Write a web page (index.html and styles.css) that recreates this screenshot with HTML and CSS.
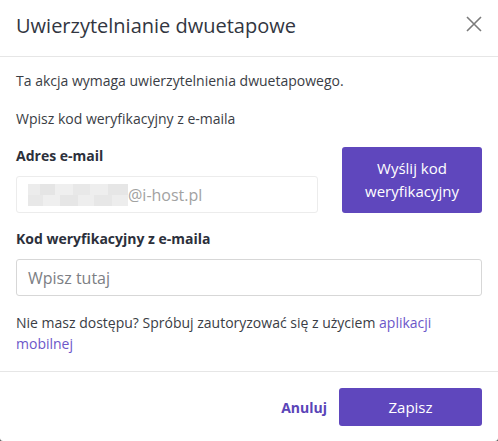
FILE: index.html
```html
<!DOCTYPE html>
<html lang="pl">
<head>
<meta charset="utf-8">
<title>Uwierzytelnianie dwuetapowe</title>
<link rel="stylesheet" href="styles.css">
</head>
<body>
<div class="modal">
  <header class="modal-header">
    <h1 class="modal-title">Uwierzytelnianie dwuetapowe</h1>
    <button class="close" aria-label="Zamknij">
      <svg width="16" height="16" viewBox="0 0 16 16"><path d="M1 1L15 15M15 1L1 15" stroke="#7b7b7b" stroke-width="1.6" fill="none"/></svg>
    </button>
  </header>
  <div class="modal-body">
    <p class="text">Ta akcja wymaga uwierzytelnienia dwuetapowego.</p>
    <p class="text gap">Wpisz kod weryfikacyjny z e-maila</p>
    <div class="email-row">
      <div class="field">
        <label class="label">Adres e-mail</label>
        <div class="input disabled"><span class="blur"></span><span class="domain">@i-host.pl</span></div>
      </div>
      <button class="btn send">Wyślij kod<br>weryfikacyjny</button>
    </div>
    <div class="field code">
      <label class="label">Kod weryfikacyjny z e-maila</label>
      <div class="input"><span class="placeholder">Wpisz tutaj</span></div>
    </div>
    <p class="text note">Nie masz dostępu? Spróbuj zautoryzować się z użyciem <a href="#" class="link">aplikacji</a><br><a href="#" class="link">mobilnej</a></p>
  </div>
  <footer class="modal-footer">
    <a href="#" class="cancel">Anuluj</a>
    <button class="btn save">Zapisz</button>
  </footer>
</div>
</body>
</html>
```
FILE: styles.css
```css
html, body { margin: 0; padding: 0; }
body {
  background: #5a5a5a;
  font-family: "Open Sans", "Noto Sans", sans-serif;
  width: 498px;
  height: 441px;
  overflow: hidden;
}
.modal {
  background: #fff;
  width: 498px;
  height: 441px;
  border-radius: 0 0 3px 3px;
  display: flex;
  flex-direction: column;
}
.modal-header {
  display: flex;
  align-items: flex-start;
  justify-content: space-between;
  padding: 12px 16px 0 16px;
  height: 44px;
  border-bottom: 1px solid #e6e6e6;
}
.modal-title {
  margin: 0;
  font-size: 20px;
  line-height: 27px;
  font-weight: 400;
  color: #323641;
}
.close {
  border: 0;
  background: none;
  padding: 0;
  margin-top: 4px;
  width: 16px;
  height: 16px;
  cursor: pointer;
}
.close svg { display: block; }
.modal-body {
  padding: 14px 16px 0 16px;
  height: 300px;
  border-bottom: 1px solid #e6e6e6;
}
.text {
  margin: 0;
  font-size: 14px;
  line-height: 20px;
  color: #3a3d45;
}
.gap { margin-top: 18px; }
.email-row {
  display: flex;
  align-items: flex-end;
  gap: 24px;
  margin-top: 17px;
}
.field { display: flex; flex-direction: column; }
.email-row .field { width: 302px; }
.label {
  font-size: 14px;
  line-height: 20px;
  font-weight: 700;
  color: #2c303b;
  margin-bottom: 10px;
}
.input {
  box-sizing: border-box;
  height: 37px;
  border: 1px solid #d7d7d7;
  border-radius: 3px;
  padding: 0 11px;
  display: flex;
  align-items: center;
  font-size: 16px;
}
.input.disabled { border-color: #ececec; }
.blur {
  display: inline-block;
  width: 100px;
  height: 22px;
  background:
    linear-gradient(90deg, #ececec 0 12%, #e5e5e5 12% 27%, #efefef 27% 45%, #e8e8e8 45% 62%, #eeeeee 62% 80%, #e6e6e6 80% 100%) top / 100% 50% no-repeat,
    linear-gradient(90deg, #e8e8e8 0 15%, #efefef 15% 32%, #e6e6e6 32% 50%, #eeeeee 50% 66%, #e7e7e7 66% 84%, #ededed 84% 100%) bottom / 100% 50% no-repeat;
}
.domain { color: #a2a2a2; }
.placeholder { color: #7c7e84; }
.btn {
  border: 0;
  background: #5f47bd;
  color: #fff;
  font-family: "Open Sans", "Noto Sans", sans-serif;
  border-radius: 3px;
  cursor: pointer;
}
.send {
  width: 140px;
  height: 66px;
  font-size: 15px;
  line-height: 23px;
  padding: 0;
}
.code { margin-top: 16px; }
.note {
  margin-top: 16px;
  line-height: 21px;
}
.link { color: #6c57c9; text-decoration: none; }
.modal-footer {
  display: flex;
  justify-content: flex-end;
  align-items: center;
  gap: 12px;
  padding: 16px 16px 15px 16px;
}
.cancel {
  color: #5a44b8;
  font-weight: 700;
  font-size: 14px;
  text-decoration: none;
}
.save {
  width: 143px;
  height: 38px;
  font-size: 15px;
}
```
